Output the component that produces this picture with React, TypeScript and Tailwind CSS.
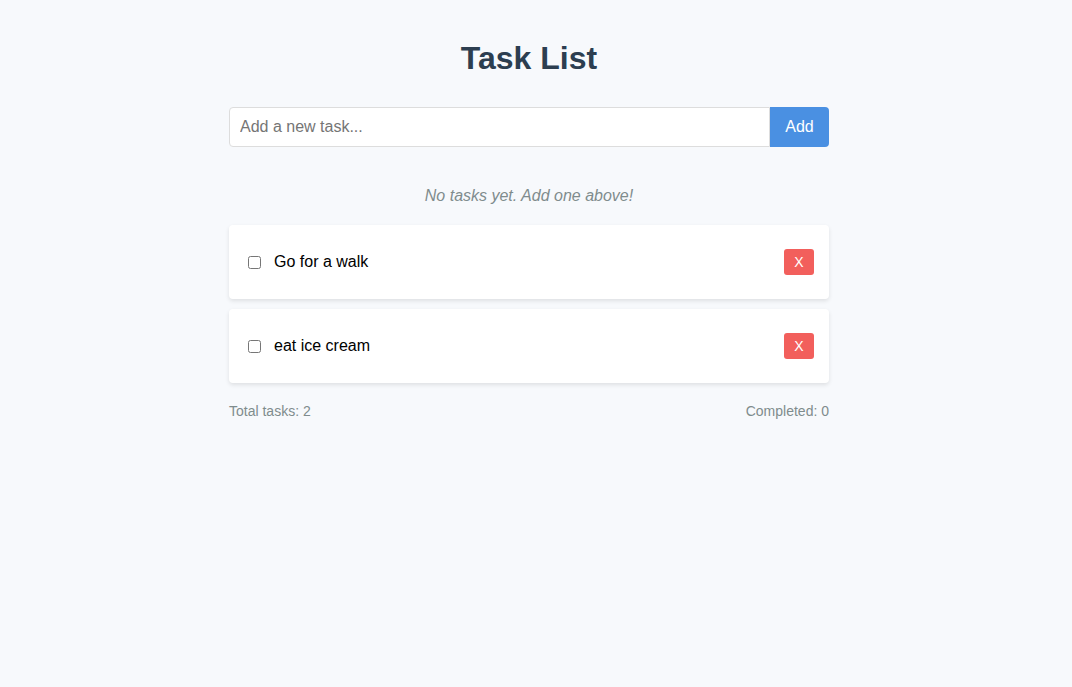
import { useState } from "react";

interface Task {
  id: number;
  text: string;
  done: boolean;
}

export default function App() {
  const [tasks, setTasks] = useState<Task[]>([
    { id: 1, text: "Go for a walk", done: false },
    { id: 2, text: "eat ice cream", done: false },
  ]);
  const [draft, setDraft] = useState("");

  const addTask = () => {
    if (!draft.trim()) return;
    setTasks([...tasks, { id: Date.now(), text: draft.trim(), done: false }]);
    setDraft("");
  };

  const toggle = (id: number) =>
    setTasks(tasks.map((t) => (t.id === id ? { ...t, done: !t.done } : t)));

  const remove = (id: number) => setTasks(tasks.filter((t) => t.id !== id));

  return (
    <div className="min-h-[687px] bg-[#f7f9fc] font-['Liberation_Sans',Arial,sans-serif] flex justify-center pr-[14px]">
      <div className="w-[600px] pt-[40px]">
        <h1 className="text-[32px] leading-[37px] font-bold text-[#2c3e50] text-center">Task List</h1>

        <div className="flex mt-[30px] h-[40px]">
          <input
            value={draft}
            onChange={(e) => setDraft(e.target.value)}
            onKeyDown={(e) => e.key === "Enter" && addTask()}
            placeholder="Add a new task..."
            className="flex-1 bg-white border border-[#dddddd] rounded-l-[4px] px-[10px] text-[16px] text-black placeholder:text-[#757575] outline-none"
          />
          <button
            onClick={addTask}
            className="w-[59px] bg-[#4a90e2] text-white text-[16px] rounded-r-[4px]"
          >
            Add
          </button>
        </div>

        <p className="mt-[30px] text-center italic text-[16px] leading-[38px] text-[#7f8c8d]">
          No tasks yet. Add one above!
        </p>

        <div className="mt-[10px] flex flex-col gap-[10px]">
          {tasks.map((t) => (
            <div
              key={t.id}
              className="h-[74px] bg-white rounded-[4px] shadow-[0_2px_4px_rgba(0,0,0,0.1)] flex items-center pl-[19px] pr-[15px]"
            >
              <input
                type="checkbox"
                checked={t.done}
                onChange={() => toggle(t.id)}
                className="w-[13px] h-[13px]"
              />
              <span
                className={`ml-[13px] flex-1 text-[16px] ${t.done ? "line-through text-[#7f8c8d]" : "text-black"}`}
              >
                {t.text}
              </span>
              <button
                onClick={() => remove(t.id)}
                className="w-[30px] h-[26px] bg-[#f25f5c] text-white text-[14px] rounded-[3px]"
              >
                X
              </button>
            </div>
          ))}
        </div>

        <div className="mt-[18px] flex justify-between text-[14px] text-[#7f8c8d]">
          <span>Total tasks: {tasks.length}</span>
          <span>Completed: {tasks.filter((t) => t.done).length}</span>
        </div>
      </div>
    </div>
  );
}
